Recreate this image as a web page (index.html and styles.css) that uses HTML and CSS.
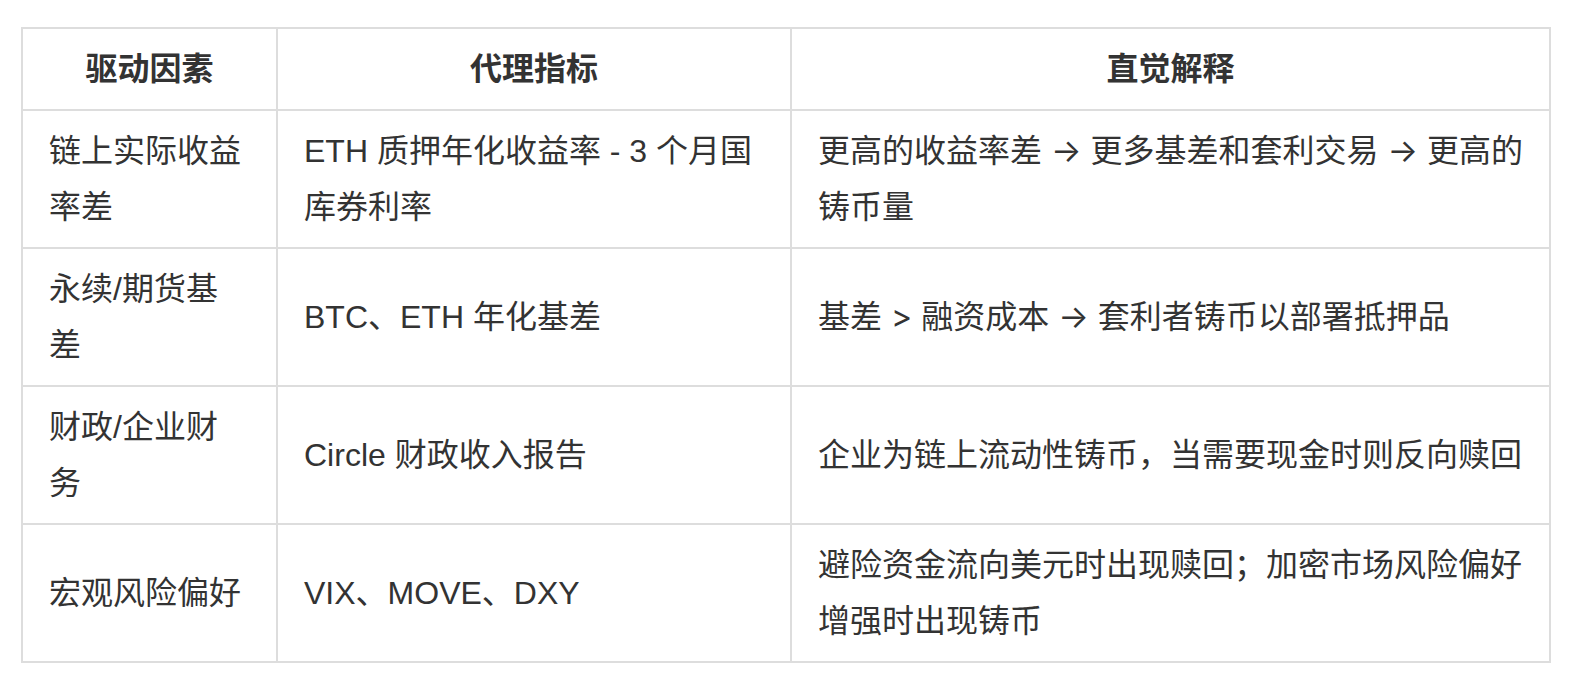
FILE: index.html
```html
<!DOCTYPE html>
<html lang="zh-CN">
<head>
<meta charset="utf-8">
<title>驱动因素</title>
<link rel="stylesheet" href="styles.css">
</head>
<body>
<div class="page">
  <div class="grid" role="table">
    <div class="cell head c1" role="columnheader">驱动因素</div>
    <div class="cell head c2" role="columnheader">代理指标</div>
    <div class="cell head c3" role="columnheader">直觉解释</div>

    <div class="cell c1">链上实际收益率差</div>
    <div class="cell c2">ETH 质押年化收益率 - 3 个月国库券利率</div>
    <div class="cell c3">更高的收益率差 → 更多基差和套利交易 → 更高的铸币量</div>

    <div class="cell c1">永续/期货基差</div>
    <div class="cell c2">BTC、ETH 年化基差</div>
    <div class="cell c3">基差 &gt; 融资成本 → 套利者铸币以部署抵押品</div>

    <div class="cell c1">财政/企业财务</div>
    <div class="cell c2">Circle 财政收入报告</div>
    <div class="cell c3">企业为链上流动性铸币，当需要现金时则反向赎回</div>

    <div class="cell c1">宏观风险偏好</div>
    <div class="cell c2">VIX、MOVE、DXY</div>
    <div class="cell c3">避险资金流向美元时出现赎回；加密市场风险偏好增强时出现铸币</div>
  </div>
</div>
</body>
</html>
```

FILE: styles.css
```css
html, body {
  margin: 0;
  padding: 0;
  background: #ffffff;
}

.page {
  padding: 27px 0 0 21px;
}

.grid {
  display: grid;
  grid-template-columns: 255px 514px 759px;
  width: max-content;
  border-top: 2px solid #dddddd;
  border-left: 2px solid #dddddd;
  font-family: "Liberation Sans", "Noto Sans CJK SC", sans-serif;
  font-size: 32px;
  line-height: 56px;
  color: #333333;
}

.cell {
  display: flex;
  align-items: center;
  border-right: 2px solid #dddddd;
  border-bottom: 2px solid #dddddd;
  padding: 12px 20px 12px 26px;
  word-break: break-all;
}

.cell.c1 {
  padding-right: 30px;
}

.cell.c2 {
  padding-right: 26px;
}

.cell.c3 {
  font-family: "Inter", "Noto Sans CJK SC", sans-serif;
}

.cell.head {
  justify-content: center;
  text-align: center;
  font-weight: bold;
  padding-left: 20px;
  padding-right: 20px;
}
```
